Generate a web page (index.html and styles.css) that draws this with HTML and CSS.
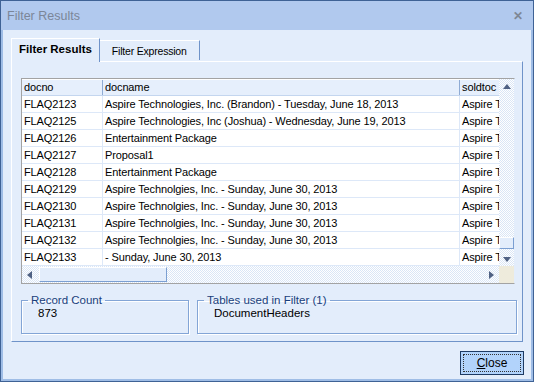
FILE: index.html
```html
<!DOCTYPE html>
<html lang="en">
<head>
    <meta charset="UTF-8">
    <title>Filter Results</title>
    <link rel="stylesheet" href="styles.css">
</head>
<body>
    <div class="window">
        <div class="titlebar">
            <span class="title">Filter Results</span>
            <span class="close-x">✕</span>
        </div>

        <div class="client">
            <div class="tabs">
                <div class="tab active">Filter Results</div>
                <div class="tab">Filter Expression</div>
            </div>

            <div class="panel">
                <div class="grid">
                    <div class="grid-main">
                        <div class="grid-body">
                            <div class="row head">
                                <div class="cell">docno</div>
                                <div class="cell">docname</div>
                                <div class="cell">soldtoc</div>
                            </div>
                            <div class="row"><div class="cell">FLAQ2123</div><div class="cell">Aspire Technologies, Inc. (Brandon) - Tuesday, June 18, 2013</div><div class="cell">Aspire Technologies</div></div>
                            <div class="row"><div class="cell">FLAQ2125</div><div class="cell">Aspire Technologies, Inc (Joshua) - Wednesday, June 19, 2013</div><div class="cell">Aspire Technologies</div></div>
                            <div class="row"><div class="cell">FLAQ2126</div><div class="cell">Entertainment Package</div><div class="cell">Aspire Technologies</div></div>
                            <div class="row"><div class="cell">FLAQ2127</div><div class="cell">Proposal1</div><div class="cell">Aspire Technologies</div></div>
                            <div class="row"><div class="cell">FLAQ2128</div><div class="cell">Entertainment Package</div><div class="cell">Aspire Technologies</div></div>
                            <div class="row"><div class="cell">FLAQ2129</div><div class="cell">Aspire Technolgies, Inc. - Sunday, June 30, 2013</div><div class="cell">Aspire Technologies</div></div>
                            <div class="row"><div class="cell">FLAQ2130</div><div class="cell">Aspire Technolgies, Inc. - Sunday, June 30, 2013</div><div class="cell">Aspire Technologies</div></div>
                            <div class="row"><div class="cell">FLAQ2131</div><div class="cell">Aspire Technolgies, Inc. - Sunday, June 30, 2013</div><div class="cell">Aspire Technologies</div></div>
                            <div class="row"><div class="cell">FLAQ2132</div><div class="cell">Aspire Technolgies, Inc. - Sunday, June 30, 2013</div><div class="cell">Aspire Technologies</div></div>
                            <div class="row"><div class="cell">FLAQ2133</div><div class="cell">- Sunday, June 30, 2013</div><div class="cell">Aspire Technologies</div></div>
                        </div>
                        <div class="vscroll">
                            <div class="sb-btn"><span class="arrow up"></span></div>
                            <div class="sb-track"></div>
                            <div class="sb-thumb-v"></div>
                            <div class="sb-btn"><span class="arrow down"></span></div>
                        </div>
                    </div>
                    <div class="hscroll">
                        <div class="sb-btn h"><span class="arrow left"></span></div>
                        <div class="sb-thumb-h"></div>
                        <div class="sb-track"></div>
                        <div class="sb-btn h"><span class="arrow right"></span></div>
                        <div class="corner"></div>
                    </div>
                </div>

                <div class="groups">
                    <fieldset class="group count">
                        <legend>Record Count</legend>
                        <div class="value">873</div>
                    </fieldset>
                    <fieldset class="group tables">
                        <legend>Tables used in Filter (1)</legend>
                        <div class="value">DocumentHeaders</div>
                    </fieldset>
                </div>
            </div>

            <div class="footer">
                <button class="btn"><span class="btn-focus"><u>C</u>lose</span></button>
            </div>
        </div>
    </div>
</body>
</html>
```

FILE: styles.css
```css
body {
    margin: 0;
    padding: 0;
    font-family: 'Liberation Sans', Arial, sans-serif;
    font-size: 11px;
    background: #e3edfb;
}

.window {
    width: 534px;
    height: 382px;
    box-sizing: border-box;
    border: 1px solid #3f6295;
    background: #9fbde6;
    display: flex;
    flex-direction: column;
}

.titlebar {
    height: 29px;
    background: #b1c9ee;
    display: flex;
    align-items: center;
    justify-content: space-between;
    padding: 1px 10px 0 6px;
    box-sizing: border-box;
    flex-shrink: 0;
}

.title {
    color: #7b8698;
    font-size: 12.5px;
}

.close-x {
    color: #7e8795;
    font-size: 12px;
    font-weight: bold;
}

.client {
    flex: 1;
    margin: 0 2px 2px 2px;
    background: #e3edfb;
    padding: 8px 8px 0 8px;
    display: flex;
    flex-direction: column;
}

.tabs {
    display: flex;
    align-items: flex-end;
    height: 23px;
    position: relative;
    z-index: 1;
}

.tab {
    height: 19px;
    padding: 0 12px;
    display: flex;
    align-items: center;
    border-top: 1px solid #fff;
    border-right: 1px solid #6f93c9;
    background: #e3edfb;
    color: #000;
    margin-bottom: 1px;
    font-size: 10.5px;
    letter-spacing: -0.2px;
}

.tab.active {
    font-weight: bold;
    font-size: 11.5px;
    letter-spacing: 0;
    border-left: 1px solid #fff;
    padding: 0 7px 3px 7px;
    margin-bottom: -1px;
    box-sizing: border-box;
    height: 24px;
}

.panel {
    width: 512px;
    height: 281px;
    box-sizing: border-box;
    border-top: 1px solid #fff;
    border-left: 1px solid #fff;
    border-right: 1px solid #6f93c9;
    border-bottom: 1px solid #6f93c9;
    padding: 16px 0 0 9px;
}

.grid {
    width: 494px;
    border: 1px solid #a3a3a3;
    border-right-color: #e3edfb;
    box-sizing: border-box;
    background: #fff;
}

.grid-main {
    display: flex;
}

.grid-body {
    width: 477px;
    overflow: hidden;
}

.row {
    display: grid;
    grid-template-columns: 81px 357px 39px;
    height: 17px;
    border-bottom: 1px solid #dde8f8;
    box-sizing: border-box;
}

.row.head {
    background: #e6effc;
    border-top: 1px solid #fff;
    border-bottom: 1px solid #c4d6ef;
}

.cell {
    white-space: nowrap;
    overflow: hidden;
    padding-left: 2px;
    line-height: 16px;
    border-right: 1px solid #dde8f8;
    color: #000;
    letter-spacing: -0.12px;
}

.row.head .cell {
    border-right-color: #8fabd4;
    line-height: 15px;
}

.cell:last-child {
    border-right: none;
}

.vscroll {
    width: 15px;
    display: flex;
    flex-direction: column;
    background: repeating-conic-gradient(#ffffff 0 25%, #dae6f6 0 50%) 0 0 / 2px 2px;
}

.sb-btn {
    height: 16px;
    display: flex;
    align-items: center;
    justify-content: center;
    flex-shrink: 0;
}

.sb-btn.h {
    height: auto;
    width: 15px;
}

.sb-track {
    flex: 1;
}

.sb-thumb-v {
    height: 10px;
    margin: 0 0 1px 0;
    border: 1px solid #7b9fd2;
    border-top-color: #fff;
    border-left-color: #fff;
    background: #e3edfb;
}

.arrow {
    width: 0;
    height: 0;
    border: 4px solid transparent;
}

.arrow.up {
    border-bottom: 5px solid #4f6183;
    border-top: none;
    margin-top: -2px;
}

.arrow.down {
    border-top: 5px solid #4f6183;
    border-bottom: none;
    margin-top: 2px;
}

.arrow.left {
    border-right: 5px solid #4f6183;
    border-left: none;
}

.arrow.right {
    border-left: 5px solid #4f6183;
    border-right: none;
}

.hscroll {
    display: flex;
    height: 17px;
    background: repeating-conic-gradient(#ffffff 0 25%, #dae6f6 0 50%) 0 0 / 2px 2px;
}

.sb-thumb-h {
    width: 126px;
    margin: 1px 0 1px 2px;
    border: 1px solid #7b9fd2;
    border-top-color: #fff;
    border-left-color: #fff;
    background: #e3edfb;
}

.corner {
    width: 15px;
    background: #eeebdc;
}

.groups {
    display: flex;
    gap: 8px;
    margin-top: 10px;
}

.group {
    margin: 0;
    padding: 1px 0 0 16px;
    height: 40px;
    box-sizing: border-box;
    border: 1px solid #83a5d6;
    box-shadow: 1px 1px 0 #fff, inset 1px 1px 0 #fff;
}

.group legend {
    color: #1a3f7c;
    padding: 0 3px;
    margin-left: -10px;
    font-size: 11.5px;
}

.group.count {
    width: 168px;
}

.group.tables {
    width: 320px;
}

.value {
    color: #000;
    font-size: 11.5px;
}

.footer {
    display: flex;
    justify-content: flex-end;
    padding: 9px 0 0 0;
    margin-right: -1px;
}

.btn {
    width: 64px;
    height: 24px;
    padding: 2px;
    border: 1px solid #1d3a63;
    background: #b2d3fb;
    font-family: 'Liberation Sans', Arial, sans-serif;
    font-size: 12px;
    color: #000;
}

.btn-focus {
    display: flex;
    height: 100%;
    align-items: center;
    justify-content: center;
    border: 1px dotted #333;
    box-sizing: border-box;
}
```
